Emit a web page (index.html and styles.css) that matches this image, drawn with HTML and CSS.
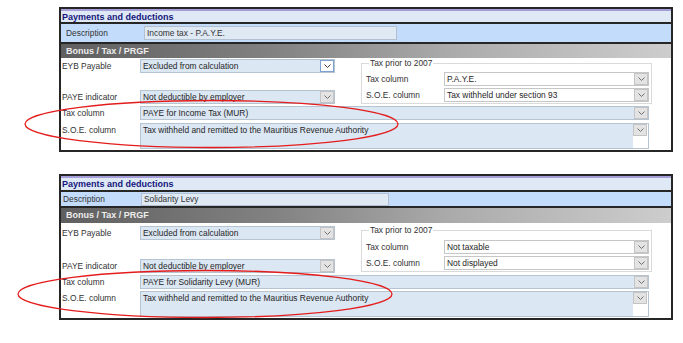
FILE: index.html
```html
<!DOCTYPE html>
<html lang="en">
<head>
  <meta charset="UTF-8" />
  <title>Payments and deductions</title>
  <link rel="stylesheet" href="styles.css">
</head>
<body>
  <div class="page">

    <section class="panel panel-a">
      <div class="panel-title">Payments and deductions</div>
      <div class="desc-row">
        <span class="desc-label">Description</span>
        <div class="desc-input">Income tax - P.A.Y.E.</div>
      </div>
      <div class="panel-body">
        <div class="section-head">Bonus / Tax / PRGF</div>
        <div class="body-top">
          <div class="left-col">
            <div class="field">
              <label>EYB Payable</label>
              <div class="select sel-short">
                <span class="sel-text">Excluded from calculation</span>
                <span class="drop drop-hot"><svg width="7" height="4" viewBox="0 0 7 4"><path d="M0.5 0.5 L3.5 3.5 L6.5 0.5" /></svg></span>
              </div>
            </div>
            <div class="field field-paye">
              <label>PAYE indicator</label>
              <div class="select sel-short">
                <span class="sel-text">Not deductible by employer</span>
                <span class="drop"><svg width="7" height="4" viewBox="0 0 7 4"><path d="M0.5 0.5 L3.5 3.5 L6.5 0.5" /></svg></span>
              </div>
            </div>
          </div>
          <fieldset class="group">
            <legend>Tax prior to 2007</legend>
            <div class="field field-g1">
              <label>Tax column</label>
              <div class="select sel-white sel-group">
                <span class="sel-text">P.A.Y.E.</span>
                <span class="drop"><svg width="7" height="4" viewBox="0 0 7 4"><path d="M0.5 0.5 L3.5 3.5 L6.5 0.5" /></svg></span>
              </div>
            </div>
            <div class="field field-g2">
              <label>S.O.E. column</label>
              <div class="select sel-white sel-group">
                <span class="sel-text">Tax withheld under section 93</span>
                <span class="drop"><svg width="7" height="4" viewBox="0 0 7 4"><path d="M0.5 0.5 L3.5 3.5 L6.5 0.5" /></svg></span>
              </div>
            </div>
          </fieldset>
        </div>
        <div class="field field-tax">
          <label>Tax column</label>
          <div class="select sel-wide">
            <span class="sel-text">PAYE for Income Tax (MUR)</span>
            <span class="drop"><svg width="7" height="4" viewBox="0 0 7 4"><path d="M0.5 0.5 L3.5 3.5 L6.5 0.5" /></svg></span>
          </div>
        </div>
        <div class="field field-soe">
          <label>S.O.E. column</label>
          <div class="memo">
            <span class="memo-text">Tax withheld and remitted to the Mauritius Revenue Authority</span>
            <span class="memo-side">
              <span class="drop"><svg width="7" height="4" viewBox="0 0 7 4"><path d="M0.5 0.5 L3.5 3.5 L6.5 0.5" /></svg></span>
            </span>
          </div>
        </div>
      </div>
    </section>

    <section class="panel panel-b">
      <div class="panel-title">Payments and deductions</div>
      <div class="desc-row">
        <span class="desc-label">Description</span>
        <div class="desc-input">Solidarity Levy</div>
      </div>
      <div class="panel-body">
        <div class="section-head">Bonus / Tax / PRGF</div>
        <div class="body-top">
          <div class="left-col">
            <div class="field">
              <label>EYB Payable</label>
              <div class="select sel-short">
                <span class="sel-text">Excluded from calculation</span>
                <span class="drop"><svg width="7" height="4" viewBox="0 0 7 4"><path d="M0.5 0.5 L3.5 3.5 L6.5 0.5" /></svg></span>
              </div>
            </div>
            <div class="field field-paye">
              <label>PAYE indicator</label>
              <div class="select sel-short">
                <span class="sel-text">Not deductible by employer</span>
                <span class="drop"><svg width="7" height="4" viewBox="0 0 7 4"><path d="M0.5 0.5 L3.5 3.5 L6.5 0.5" /></svg></span>
              </div>
            </div>
          </div>
          <fieldset class="group">
            <legend>Tax prior to 2007</legend>
            <div class="field field-g1">
              <label>Tax column</label>
              <div class="select sel-white sel-group">
                <span class="sel-text">Not taxable</span>
                <span class="drop"><svg width="7" height="4" viewBox="0 0 7 4"><path d="M0.5 0.5 L3.5 3.5 L6.5 0.5" /></svg></span>
              </div>
            </div>
            <div class="field field-g2">
              <label>S.O.E. column</label>
              <div class="select sel-white sel-group">
                <span class="sel-text">Not displayed</span>
                <span class="drop"><svg width="7" height="4" viewBox="0 0 7 4"><path d="M0.5 0.5 L3.5 3.5 L6.5 0.5" /></svg></span>
              </div>
            </div>
          </fieldset>
        </div>
        <div class="field field-tax">
          <label>Tax column</label>
          <div class="select sel-wide">
            <span class="sel-text">PAYE for Solidarity Levy (MUR)</span>
            <span class="drop"><svg width="7" height="4" viewBox="0 0 7 4"><path d="M0.5 0.5 L3.5 3.5 L6.5 0.5" /></svg></span>
          </div>
        </div>
        <div class="field field-soe">
          <label>S.O.E. column</label>
          <div class="memo">
            <span class="memo-text">Tax withheld and remitted to the Mauritius Revenue Authority</span>
            <span class="memo-side">
              <span class="drop"><svg width="7" height="4" viewBox="0 0 7 4"><path d="M0.5 0.5 L3.5 3.5 L6.5 0.5" /></svg></span>
            </span>
          </div>
        </div>
      </div>
    </section>

    <!-- red annotation rings drawn over the screenshot -->
    <svg class="marks" width="683" height="343" viewBox="0 0 683 343">
      <ellipse cx="211.5" cy="124" rx="186.5" ry="23.5" />
      <ellipse cx="205" cy="294" rx="187" ry="23.5" />
    </svg>

  </div>
</body>
</html>
```

FILE: styles.css
```css
* {
  box-sizing: border-box;
}

body {
  margin: 0;
  background: #fff;
  font-family: 'Liberation Sans', Arial, sans-serif;
  font-size: 8.4px;
  color: #262626;
}

.page {
  position: relative;
  width: 683px;
  height: 343px;
  overflow: hidden;
}

.panel {
  margin-left: 59px;
  width: 614px;
}

.panel-a {
  padding-top: 7px;
}

.panel-b {
  margin-top: 22px;
}

/* title bar */
.panel-title {
  height: 16px;
  border: 2px solid #262626;
  border-bottom-width: 1px;
  background: #dfe9f5;
  box-shadow: inset 0 2px 0 #a59ed9;
  color: #15157c;
  font-size: 9px;
  font-weight: bold;
  line-height: 14px;
  padding: 1px 0 0 1px;
}

.panel-b .panel-title {
  height: 17px;
  line-height: 15px;
}

/* description row */
.desc-row {
  height: 21px;
  border: 2px solid #262626;
  border-top: 1px solid #262626;
  background: #c3dcfb;
  display: flex;
  align-items: center;
  padding-left: 5px;
}

.panel-b .desc-row {
  height: 17px;
  padding-left: 2px;
}

.desc-label {
  width: 78px;
  color: #333;
}

.desc-input {
  width: 253px;
  height: 14px;
  background: #dfe9f4;
  border: 1px solid #b2c0cf;
  line-height: 12px;
  padding-left: 2px;
  color: #333;
}

.panel-b .desc-input {
  width: 248px;
  height: 13px;
  line-height: 11px;
}

/* body */
.panel-body {
  border: 2px solid #262626;
  border-top: 0;
  background: #fff;
  padding-bottom: 1px;
}

.section-head {
  height: 14px;
  background: linear-gradient(to right, #5f5f5f 0%, #828282 35%, #acacac 65%, #cdcdcd 100%);
  color: #ededed;
  font-size: 9px;
  font-weight: bold;
  line-height: 14px;
  padding-left: 5px;
}

.panel-b .section-head {
  height: 15px;
  line-height: 15px;
}

.body-top {
  display: flex;
  align-items: flex-start;
}

.left-col {
  margin-top: 1px;
  width: 278px;
}

.panel-b .left-col {
  margin-top: 3px;
}

.field {
  display: flex;
  align-items: center;
}

.field label {
  width: 79px;
  padding-left: 1px;
  color: #333;
  white-space: nowrap;
}

.field-paye {
  margin-top: 17px;
}

.panel-b .field-paye {
  margin-top: 19px;
}

/* combo boxes */
.select {
  height: 14px;
  display: flex;
  align-items: stretch;
  background: #dbe7f3;
  border: 1px solid #b6c3d0;
}

.sel-text {
  flex: 1;
  line-height: 12px;
  padding-left: 2px;
  white-space: nowrap;
  overflow: hidden;
}

.sel-short {
  width: 195px;
}

.sel-wide {
  width: 509px;
}

.sel-white {
  background: #fff;
  border-color: #c6c6c6;
}

.sel-group {
  width: 205px;
}

.drop {
  width: 14px;
  height: 12px;
  background: #e3e3e3;
  border: 1px solid #c4c4c4;
  display: flex;
  align-items: center;
  justify-content: center;
}

.drop svg path {
  fill: none;
  stroke: #707070;
  stroke-width: 1;
}

.drop-hot {
  background: #fff;
  border-color: #7da2cf;
}

.drop-hot svg path {
  stroke: #3c3c3c;
}

/* Tax prior to 2007 group box */
.group {
  margin: 0 0 0 22px;
  width: 291px;
  min-width: 0;
  padding: 0 2px 1px 3px;
  border: 1px solid #dadada;
}

.panel-b .group {
  margin-top: 2px;
}

.group legend {
  margin-left: 4px;
  padding: 0 1px;
  line-height: 10px;
  color: #333;
}

.field-g1 {
  margin-top: 4px;
}

.panel-b .field-g1 {
  margin-top: 5px;
}

.field-g2 {
  margin-top: 2px;
}

.field-tax {
  margin-top: 2px;
}

.field-soe {
  margin-top: 3px;
  align-items: flex-start;
}

.panel-b .field-soe {
  margin-top: 2px;
}

.field-soe label {
  line-height: 14px;
}

/* multi-line S.O.E. box */
.memo {
  width: 509px;
  height: 26px;
  display: flex;
  background: #dbe7f3;
  border: 1px solid #b6c3d0;
}

.memo-text {
  flex: 1;
  line-height: 12px;
  padding-left: 2px;
  white-space: nowrap;
}

.memo-side {
  width: 15px;
  background: #fff;
}

/* annotation */
.marks {
  position: absolute;
  left: 0;
  top: 0;
  pointer-events: none;
}

.marks ellipse {
  fill: none;
  stroke: #e41c1c;
  stroke-width: 1.3;
}
```
